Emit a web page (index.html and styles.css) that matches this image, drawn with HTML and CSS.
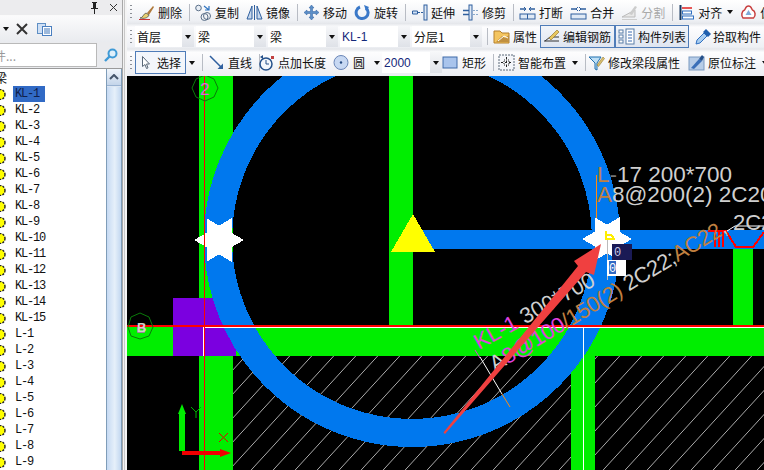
FILE: index.html
```html
<!DOCTYPE html>
<html lang="zh-CN">
<head>
<meta charset="utf-8">
<title>梁</title>
<link rel="stylesheet" href="styles.css">
</head>
<body>
<div class="app">
  <aside class="side">
    <div class="side-title">
      <svg class="pin" width="9" height="12" viewBox="0 0 9 12"><path d="M2 0h5v1H6v5h2v1H5v5H4V7H1V6h2V1H2z" fill="#222"/></svg>
      <svg class="close" width="9" height="9" viewBox="0 0 9 9"><path d="M1 1l7 7M8 1L1 8" stroke="#333" fill="none"/></svg>
    </div>
    <div class="side-tools">
      <i class="arrow"></i>
      <svg width="12" height="12" viewBox="0 0 12 12"><path d="M1 1l10 10M11 1L1 11" stroke="#333" stroke-width="2" fill="none"/></svg>
      <svg class="copy" width="15" height="13" viewBox="0 0 15 13"><rect x=".5" y=".5" width="8" height="10" fill="#cfe0f5" stroke="#5f8fc4"/><rect x="5.500" y="3.500" width="9" height="9" fill="#fff" stroke="#4a7fc0"/><path d="M7 6h6M7 8h6M7 10h6" stroke="#3d74b8"/></svg>
    </div>
    <div class="side-search">
      <div class="search-box"><span>件...</span></div>
      <svg width="16" height="14" viewBox="0 0 16 14"><circle cx="9.500" cy="5.500" r="4" fill="#dff0fb" stroke="#3f9ad6" stroke-width="2"/><path d="M6.500 8.500L2 13" stroke="#3f9ad6" stroke-width="2.400"/></svg>
    </div>
    <div class="tree-wrap">
      <ul class="tree">
        <li class="root">梁</li>
        <li><svg class="gear" viewBox="0 0 7 11"><defs><circle id="gear" cx="0" cy="5.500" r="5" fill="#ffff00" stroke="#222" stroke-dasharray="2 1.200" stroke-width="1.400"/></defs><use href="#gear"/></svg><span class="sel">KL-1</span></li>
        <li><svg class="gear" viewBox="0 0 7 11"><use href="#gear"/></svg><span>KL-2</span></li>
        <li><svg class="gear" viewBox="0 0 7 11"><use href="#gear"/></svg><span>KL-3</span></li>
        <li><svg class="gear" viewBox="0 0 7 11"><use href="#gear"/></svg><span>KL-4</span></li>
        <li><svg class="gear" viewBox="0 0 7 11"><use href="#gear"/></svg><span>KL-5</span></li>
        <li><svg class="gear" viewBox="0 0 7 11"><use href="#gear"/></svg><span>KL-6</span></li>
        <li><svg class="gear" viewBox="0 0 7 11"><use href="#gear"/></svg><span>KL-7</span></li>
        <li><svg class="gear" viewBox="0 0 7 11"><use href="#gear"/></svg><span>KL-8</span></li>
        <li><svg class="gear" viewBox="0 0 7 11"><use href="#gear"/></svg><span>KL-9</span></li>
        <li><svg class="gear" viewBox="0 0 7 11"><use href="#gear"/></svg><span>KL-10</span></li>
        <li><svg class="gear" viewBox="0 0 7 11"><use href="#gear"/></svg><span>KL-11</span></li>
        <li><svg class="gear" viewBox="0 0 7 11"><use href="#gear"/></svg><span>KL-12</span></li>
        <li><svg class="gear" viewBox="0 0 7 11"><use href="#gear"/></svg><span>KL-13</span></li>
        <li><svg class="gear" viewBox="0 0 7 11"><use href="#gear"/></svg><span>KL-14</span></li>
        <li><svg class="gear" viewBox="0 0 7 11"><use href="#gear"/></svg><span>KL-15</span></li>
        <li><svg class="gear" viewBox="0 0 7 11"><use href="#gear"/></svg><span>L-1</span></li>
        <li><svg class="gear" viewBox="0 0 7 11"><use href="#gear"/></svg><span>L-2</span></li>
        <li><svg class="gear" viewBox="0 0 7 11"><use href="#gear"/></svg><span>L-3</span></li>
        <li><svg class="gear" viewBox="0 0 7 11"><use href="#gear"/></svg><span>L-4</span></li>
        <li><svg class="gear" viewBox="0 0 7 11"><use href="#gear"/></svg><span>L-5</span></li>
        <li><svg class="gear" viewBox="0 0 7 11"><use href="#gear"/></svg><span>L-6</span></li>
        <li><svg class="gear" viewBox="0 0 7 11"><use href="#gear"/></svg><span>L-7</span></li>
        <li><svg class="gear" viewBox="0 0 7 11"><use href="#gear"/></svg><span>L-8</span></li>
        <li><svg class="gear" viewBox="0 0 7 11"><use href="#gear"/></svg><span>L-9</span></li>
      </ul>
      <div class="scrollbar">
        <div class="scroll-btn"><svg width="10" height="6" viewBox="0 0 10 6"><path d="M1 5l4-4 4 4" fill="none" stroke="#44546a" stroke-width="2"/></svg></div>
        <div class="scroll-thumb"></div>
      </div>
    </div>
  </aside>
  <div class="gutter"></div>
  <main class="main">
    <div class="bar bar1">
      <i class="grip"></i>
      <div class="tool first"><svg class="ic" viewBox="0 0 17 17"><path d="M9 9l6-7 1 1-5 8z" fill="#b07a3c"/><path d="M2 14c3 0 3-4 6-5l3 2c-1 3-5 4-9 3z" fill="#e8d070" stroke="#444" stroke-width=".7"/><path d="M1 15.500h11" stroke="#c33"/></svg><span>删除</span></div>
      <i class="sep"></i>
      <div class="tool"><svg class="ic" viewBox="0 0 17 17"><circle cx="3.500" cy="4" r="2.800" fill="#e8eef5" stroke="#5a6f88"/><circle cx="12" cy="12" r="3.500" fill="none" stroke="#5a6f88"/><circle cx="9.500" cy="13" r="3.500" fill="none" stroke="#5a6f88"/><path d="M9 2l5 4M14 2v4h-4" fill="none" stroke="#2f74c0" stroke-width="1.200"/></svg><span>复制</span></div>
      <div class="tool"><svg class="ic" viewBox="0 0 17 17"><path d="M1 15L6 2v13zM16 15L11 2v13z" fill="#c6d8ee" stroke="#2f5f9e"/><path d="M8.500 1v15" stroke="#2f5f9e"/></svg><span>镜像</span></div>
      <i class="sep"></i>
      <div class="tool"><svg class="ic" viewBox="0 0 17 17"><path d="M8.500 1l2.500 3H9.500v3.500H13V6l3 2.500-3 2.500V9.500H9.500V13H11l-2.500 3L6 13h1.500V9.500H4V11L1 8.500 4 6v1.500h3.500V4H6z" fill="#5b8fc8" stroke="#2f5f9e" stroke-width=".5"/></svg><span>移动</span></div>
      <div class="tool"><svg class="ic" viewBox="0 0 17 17"><path d="M6 3a6 6 0 1 0 6 1" fill="none" stroke="#3a78c8" stroke-width="3"/><path d="M10 1l5 2-3 4z" fill="#3a78c8"/></svg><span>旋转</span></div>
      <i class="sep"></i>
      <div class="tool"><svg class="ic" viewBox="0 0 17 17"><path d="M1.500 7h5v3h-5z" fill="#cfe0f5" stroke="#2f5f9e"/><path d="M7 8.500h5" stroke="#2f5f9e" stroke-dasharray="2 1"/><rect x="13" y="1" width="3" height="15" fill="#dfe9f5" stroke="#2f5f9e"/></svg><span>延伸</span></div>
      <div class="tool"><svg class="ic" viewBox="0 0 17 17"><path d="M1 6.500h6M1 10.500h6" stroke="#2f5f9e" stroke-width="1.500"/><rect x="7" y="1" width="3" height="15" fill="#dfe9f5" stroke="#2f5f9e"/><path d="M11 6.500h5M11 10.500h5" stroke="#8aa9cc" stroke-dasharray="2 1"/></svg><span>修剪</span></div>
      <i class="sep"></i>
      <div class="tool"><svg class="ic" viewBox="0 0 17 17"><rect x="1" y="10" width="15" height="5" fill="#dfe9f5" stroke="#2f5f9e"/><path d="M8.500 10v5" stroke="#2f5f9e"/><path d="M1 5h6M10 5h6" stroke="#2f5f9e" stroke-width="1.500"/><path d="M5 3l2 2-2 2M12 3l-2 2 2 2" stroke="#2f5f9e" fill="none"/></svg><span>打断</span></div>
      <div class="tool"><svg class="ic" viewBox="0 0 17 17"><rect x="1" y="10" width="15" height="5" fill="#dfe9f5" stroke="#2f5f9e"/><path d="M1 5h5M11 5h5" stroke="#2f5f9e" stroke-width="1.500"/><path d="M8 3L6 5l2 2M9 3l2 2-2 2" stroke="#2f5f9e" fill="none"/></svg><span>合并</span></div>
      <div class="tool off"><svg class="ic" viewBox="0 0 17 17"><path d="M1 13h13V6z" fill="#e8e8e8" stroke="#bbb"/><path d="M8 10l6-8 2 1-5 8z" fill="#ccc"/><path d="M1 15.500h15" stroke="#ccc"/></svg><span>分割</span></div>
      <i class="sep"></i>
      <div class="tool"><svg class="ic" viewBox="0 0 17 17"><path d="M2.500 1v15" stroke="#14365f" stroke-width="2"/><path d="M4 4h10" stroke="#e02020" stroke-width="1.500"/><rect x="4.500" y="7" width="9" height="3" fill="#fff" stroke="#2f6fc0"/><rect x="4.500" y="12" width="11" height="3" fill="#fff" stroke="#2f6fc0"/></svg><span>对齐</span><i class="arrow tight"></i></div>
      <div class="tool"><svg class="ic" viewBox="0 0 17 17"><path d="M8.500 2c3 0 3 3 4 4 3 1 3.500 6 1 8H3C1 12 1.500 7 4.500 6c1-1 1-4 4-4z" fill="#fff" stroke="#c84040" stroke-width="1.500"/><path d="M8.500 6l3 5h-6z" fill="#7faad8"/></svg><span>偏移</span></div>
    </div>
    <div class="bar bar2">
      <i class="grip"></i>
      <div class="combo w-a"><span>首层</span></div><div class="combo-btn"><i class="arrow"></i></div>
      <div class="combo w-b"><span>梁</span></div><div class="combo-btn"><i class="arrow"></i></div>
      <div class="combo w-c"><span>梁</span></div><div class="combo-btn"><i class="arrow"></i></div>
      <div class="combo w-c"><span class="latin">KL-1</span></div><div class="combo-btn"><i class="arrow"></i></div>
      <div class="combo w-c"><span>分层1</span></div><div class="combo-btn"><i class="arrow"></i></div>
      <i class="sep s2"></i>
      <div class="tool t2"><svg class="ic" viewBox="0 0 17 17"><path d="M1 3h6l2 2h7v10H1z" fill="#f4c560" stroke="#b5802c"/><path d="M3 14l6-6 3 2 4-3v7H3z" fill="#c09040"/><path d="M5 13l6-5 4 2" stroke="#fff" fill="none"/></svg><span>属性</span></div>
      <div class="tool btn b-a"><svg class="ic" viewBox="0 0 17 17"><path d="M1 13h15" stroke="#333"/><path d="M2 13l5-4h9" stroke="#333" fill="none"/><path d="M6 10l8-8 2 2-8 8z" fill="#e8c860" stroke="#8a6a20" stroke-width=".6"/></svg><span>编辑钢筋</span></div>
      <div class="tool btn b-b"><svg class="ic" viewBox="0 0 17 17"><rect x="1" y="2" width="4" height="3" fill="#fff" stroke="#5a7ea8"/><rect x="1" y="7" width="4" height="3" fill="#fff" stroke="#5a7ea8"/><rect x="1" y="12" width="4" height="3" fill="#fff" stroke="#5a7ea8"/><rect x="8" y="1" width="8" height="15" fill="#fff" stroke="#5a7ea8"/><path d="M10 4h4M10 7h4M10 10h4M10 13h4" stroke="#3a6ab0"/></svg><span>构件列表</span></div>
      <div class="tool t3"><svg class="ic" viewBox="0 0 17 17"><path d="M1 16l1-4 7-7 3 3-7 7z" fill="#a8cdf0" stroke="#2f6fc0"/><path d="M8 4l3-3 5 5-3 3z" fill="#1f5fae"/></svg><span>拾取构件</span></div>
    </div>
    <div class="bar bar3">
      <i class="grip"></i>
      <div class="tool btn pick"><svg class="cursor" width="8" height="13" viewBox="0 0 8 13"><path d="M.5.500v10l2.500-2 1.500 4 1.500-.6-1.500-3.900H7.500z" fill="#fff" stroke="#5a6878"/></svg><span>选择</span></div>
      <i class="arrow a3"></i>
      <i class="sep"></i>
      <div class="tool"><svg class="ic" viewBox="0 0 17 17"><path d="M2 2l12 12" stroke="#2f5f9e" stroke-width="1.500"/><path d="M15 15H9.500L15 9.500z" fill="#2f5f9e"/></svg><span>直线</span></div>
      <i class="sep"></i>
      <div class="tool t4"><svg class="ic" viewBox="0 0 17 17"><circle cx="8" cy="10" r="6" fill="#f4f7fb" stroke="#24508a" stroke-width="1.500"/><path d="M8 6v4h3" stroke="#24508a" fill="none"/><path d="M2 3l3-2v4z" fill="#24508a"/><rect x="13" y="2" width="3" height="3" fill="#c04040"/></svg><span>点加长度</span></div>
      <div class="tool"><svg class="ic" viewBox="0 0 17 17"><circle cx="8" cy="8.500" r="7" fill="#c7d8f2" stroke="#6a86b8"/><circle cx="8" cy="8.500" r="1.200" fill="#244a80"/></svg><span>圆</span><i class="arrow a4"></i></div>
      <div class="combo w-d"><span class="latin">2000</span></div><div class="combo-btn"><i class="arrow"></i></div>
      <div class="tool t6"><svg class="ic" viewBox="0 0 17 17"><rect x="1" y="3" width="14" height="11" fill="#a9c4ec" stroke="#3f6aa8"/></svg><span>矩形</span></div>
      <i class="sep"></i>
      <div class="tool t7"><svg class="ic" viewBox="0 0 17 17"><rect x="1" y="1" width="15" height="15" fill="#f4f6fa" stroke="#5a6878" stroke-dasharray="2 1"/><path d="M8.500 3v11M3 8.500h11" stroke="#222" stroke-dasharray="2 2"/><rect x="6" y="6" width="5" height="5" fill="none" stroke="#222" stroke-dasharray="1 1"/></svg><span>智能布置</span><i class="arrow a5"></i></div>
      <i class="sep"></i>
      <div class="tool t8"><svg class="ic" viewBox="0 0 17 17"><path d="M1 3h12L9 9v7l-2-1V9z" fill="#bfe0f6" stroke="#1f6fae"/><path d="M9 11l6-8 1.500 1.500-6 8z" fill="#d8c070" stroke="#8a6a20" stroke-width=".5"/></svg><span>修改梁段属性</span></div>
      <div class="tool t9"><svg class="ic" viewBox="0 0 17 17"><rect x="1" y="3" width="15" height="13" fill="#b7cde8" stroke="#7a99c0"/><path d="M3 14l8-9 3 2-8 8z" fill="#3a6fb8"/><path d="M11 5l3-4 2 2-2 4z" fill="#24508a"/></svg><span>原位标注</span><i class="arrow a5"></i></div>
    </div>
    <svg class="canvas" width="637" height="394" viewBox="127 76 637 394" font-family="'Liberation Sans',sans-serif" font-size="22">
      <defs>
        <pattern id="hatch" patternUnits="userSpaceOnUse" width="22" height="24"><path d="M-2 26.200L24 -2.200" stroke="#aaa" stroke-width="1"/></pattern>
      </defs>
      <rect x="127" y="76" width="637" height="394" fill="#000"/>
      <g shape-rendering="crispEdges">
        <rect x="233" y="356" width="338" height="114" fill="url(#hatch)"/>
        <rect x="595" y="356" width="169" height="114" fill="url(#hatch)"/>
        <rect x="199" y="76" width="34" height="394" fill="#00ee00"/>
        <rect x="389" y="76" width="24" height="250" fill="#00ee00"/>
        <rect x="733" y="248" width="20" height="78" fill="#00ee00"/>
        <rect x="571" y="356" width="24" height="114" fill="#00ee00"/>
        <rect x="127" y="327" width="637" height="29" fill="#00ee00"/>
        <rect x="173" y="298" width="63" height="58" fill="#7b00e0"/>
        <rect x="413" y="230" width="351" height="19" fill="#0078ee"/>
        <circle cx="412" cy="239" r="194" fill="none" stroke="#0078ee" stroke-width="28"/>
        <path d="M391 252L413 214L435 252z" fill="#ffff00"/>
        <polygon points="244,240 231.500,232.800 231.500,218.300 219,225.600 206.500,218.300 206.500,232.800 194,240 206.500,247.200 206.500,261.700 219,254.400 231.500,261.700 231.500,247.200" fill="#fff"/>
        <polygon points="632,239 619.500,231.800 619.500,217.300 607,224.600 594.500,217.300 594.500,231.800 582,239 594.500,246.200 594.500,260.700 607,253.400 619.500,260.700 619.500,246.200" fill="#fff"/>
        <path d="M127 326h637" stroke="#ff0000" stroke-width="1.500"/>
        <path d="M203 327.500h561M203.500 327v29M583.500 327v143" stroke="#fff"/>
        <path d="M204.500 76v394" stroke="#ff0000" stroke-width="1.500"/>
        <path d="M596.500 175v43" stroke="#ff8a10" stroke-width="1.500"/>
        <path d="M607.500 240v40" stroke="#bbb"/>
        <path d="M606 231v8h9M606 235h5l3 3" fill="none" stroke="#ffee00" stroke-width="2"/>
        <path d="M708 231h18l10 16h17l11-15" fill="none" stroke="#ff0000" stroke-width="2"/>
        <path d="M715 231v16M719 231v16M723 231v16" stroke="#ff0000" stroke-width="2"/>
      </g>
      <path d="M727 231l8-5h29" fill="none" stroke="#fff"/>
      <path d="M475 350l5 8" stroke="#e040e0"/>
      <path d="M480 357l22 37" stroke="#fff"/>
      <path d="M502 394l8 13" stroke="#ff8a10"/>
      <polygon points="182,404 186,414 185,414 185,451 179,451 179,414 178,414" fill="#00ee00"/>
      <polygon points="231,453 220,449 220,451 182,451 182,455 220,455 220,457" fill="#f00000"/>
      <path d="M191 407l5 5 5-5M196 412v6" stroke="#00b000" fill="none"/>
      <path d="M219 433l9 9M228 433l-9 9" stroke="#e00000" fill="none"/>
      <polygon points="205,75 214,79 218,88 214,97 205,101 196,97 192,88 196,79" fill="none" stroke="#0a7a0a"/>
      <text x="200" y="95" font-size="17" fill="#e060e0">2</text>
      <polygon points="140,313 149,317 153,327 149,336 140,339 131,336 128,327 131,317" fill="none" stroke="#0a7a0a"/>
      <path d="M138 328h6v4h-6z" fill="none" stroke="#d060d0" stroke-width="1.500"/>
      <text x="137" y="332" font-size="13" font-weight="bold" fill="#cfcfcf">B</text>
      <text x="597" y="182" font-size="22.500" fill="#cfcfcf"><tspan fill="#c08040">L</tspan><tspan fill="#777">-</tspan>17 200*700</text>
      <text x="597" y="202" font-size="22.500" fill="#cfcfcf"><tspan fill="#c08040">A</tspan>8@200(2) 2C20</text>
      <text x="733" y="230" fill="#cfcfcf">2C22</text>
      <g transform="rotate(-29 479 350)">
        <text x="479" y="350" fill="#cfcfcf"><tspan fill="#e040e0">KL-1</tspan> 300*700</text>
      </g>
      <g transform="rotate(-31 495 372)">
        <text class="tight-text" x="495" y="372" fill="#cfcfcf">A<tspan fill="#e040e0">8@100</tspan><tspan fill="#c08040">/150(2)</tspan> 2C22;<tspan fill="#c08040">AC22</tspan>,</text>
      </g>
      <polygon points="445,434 443.500,432.500 578,266 574,261 601,244 594,275 586,272" fill="#f04040"/>
      <g font-family="'Liberation Mono',monospace" font-size="12">
        <rect x="612" y="244" width="20" height="16" fill="#1a1a55"/>
        <text x="614" y="256" fill="#c8c8e8">0</text>
        <rect x="607" y="260" width="19" height="16" fill="#fff"/>
        <rect x="609" y="261" width="7" height="13" fill="#316ac5"/>
        <text x="609" y="272" fill="#fff">0</text>
      </g>
    </svg>
  </main>
</div>
</body>
</html>
```
FILE: styles.css
```css
* { box-sizing: border-box; }
html, body { margin: 0; padding: 0; width: 764px; height: 470px; overflow: hidden; }
body { background: #e9ebf0; font: 12px "Noto Sans CJK SC", "Liberation Sans", sans-serif; color: #111; }
ul { list-style: none; margin: 0; padding: 0; }
.app { display: flex; width: 764px; height: 470px; }

.side { width: 122px; display: flex; flex-direction: column; background: #f1f2f4; overflow: hidden; }
.side-title { height: 16px; display: flex; align-items: center; justify-content: flex-end; gap: 10px; padding-right: 4px; background: #ececee; border-bottom: 1px solid #fafafa; }
.side-tools { height: 26px; display: flex; align-items: center; padding-left: 3px; gap: 7px; background: linear-gradient(#fbfbfc, #e9ebef); }
.copy { margin-left: 2px; }
.side-search { height: 26px; display: flex; align-items: center; gap: 6px; background: #eaebee; }
.search-box { width: 99px; height: 24px; margin-left: -2px; background: #fff; border: 1px solid #b9b9b9; display: flex; align-items: center; color: #999; overflow: hidden; }
.search-box span { margin-left: -5px; white-space: nowrap; }
.tree-wrap { flex: 1; display: flex; background: #fff; border-top: 1px solid #9a9a9a; min-height: 0; }
.tree { flex: 1; font: 12px "Liberation Mono", monospace; letter-spacing: -1.2px; }
.tree li { height: 16px; display: flex; align-items: center; gap: 6px; line-height: 16px; color: #111; }
.tree li.root { height: 17px; font: 12px "Noto Sans CJK SC", sans-serif; letter-spacing: 0; margin-left: -5px; }
.gear { width: 7px; height: 11px; flex: none; }
.tree span { padding: 0 6px 0 2px; height: 16px; }
.tree .sel { background: #316ac5; color: #10204a; }
.scrollbar { width: 16px; display: flex; flex-direction: column; gap: 1px; background: #dde7f3; border-left: 1px solid #7f9db9; border-right: 1px solid #7f9db9; }
.scroll-btn { height: 17px; display: flex; align-items: center; justify-content: center; background: linear-gradient(#f0f5fb, #c4d5ea); border-bottom: 1px solid #9ab3d2; }
.scroll-thumb { flex: 1; background: linear-gradient(90deg, #c6daf3, #e6f0fa 55%, #c2d7f0); }

.gutter { width: 5px; background: linear-gradient(90deg, #a8a8a8 0, #a8a8a8 1px, #f2f2f2 1px, #f2f2f2 2px, #c8c8c8 2px, #c8c8c8 3px, #f4f4f4 3px); }
.main { flex: 1; display: flex; flex-direction: column; min-width: 0; overflow: hidden; }
.canvas { display: block; flex: none; }
.tight-text { letter-spacing: -.4px; }

.bar { display: flex; align-items: center; gap: 7px; white-space: nowrap; overflow: hidden; padding-left: 3px; }
.bar1 { height: 24px; background: linear-gradient(#fff, #eef0f4 85%, #e4e6ea); }
.bar2 { height: 25px; gap: 0; background: linear-gradient(#e8eaee 0, #fdfdfe 12%, #eef0f4 92%, #e4e6ea); }
.bar3 { height: 27px; background: linear-gradient(#e4e6ea 0, #fdfdfe 12%, #eceef3); }
.grip { width: 2px; height: 14px; flex: none; background: repeating-linear-gradient(#8b8f96 0 1px, transparent 1px 4px); }
.bar1 .first { margin-left: -1px; }
.tool { display: flex; align-items: center; gap: 3px; flex: none; }
.ic { width: 17px; height: 17px; flex: none; }
.off { color: #a9a9a9; }
.sep { width: 1px; height: 17px; background: #b8bcc4; flex: none; margin-right: -2px; }
.arrow { width: 0; height: 0; flex: none; border: 3.500px solid transparent; border-top: 4px solid #111; border-bottom: 0; display: block; }
.tight { margin-left: 2px; }

.combo { background: #fff; height: 21px; display: flex; align-items: center; padding-left: 2px; flex: none; }
.combo .latin { font: 12px "Liberation Sans", sans-serif; color: #14287a; }
.combo-btn { width: 12px; height: 21px; background: linear-gradient(#f6f7f9, #dfe2e8); display: flex; align-items: center; justify-content: center; flex: none; margin-right: 2px; }
.w-a { width: 47px; margin-left: 3px; }
.w-b { width: 58px; }
.w-c { width: 58px; }
.w-d { width: 48px; }
.bar3 .combo-btn { margin: 0 0 0 -7px; }
.bar3 .combo { margin-left: -5px; }
.s2 { margin-left: 3px; }
.t2 { margin-left: 7px; }
.btn { height: 23px; padding: 0 2px; border: 1px solid #4f7cb8; background: linear-gradient(#f2f5fa, #dfe5f0); }
.b-a { margin-left: 3px; width: 75px; }
.b-b { width: 74px; margin-left: 0; }
.t3 { margin-left: 6px; gap: 1px; }
.pick { width: 51px; margin-left: -4px; gap: 7px; padding-left: 6px; background: #f3f6fb; }
.cursor { flex: none; }
.a3 { margin-left: -4px; }
.a4 { margin-left: 6px; }
.a5 { margin-left: 3px; }
.t4 { margin-left: -7px; }
.t6 { margin-left: -7px; }
.t7 { margin-left: -1px; }
.t8 { margin-left: -3px; }
.t9 { margin-left: 1px; }
```
